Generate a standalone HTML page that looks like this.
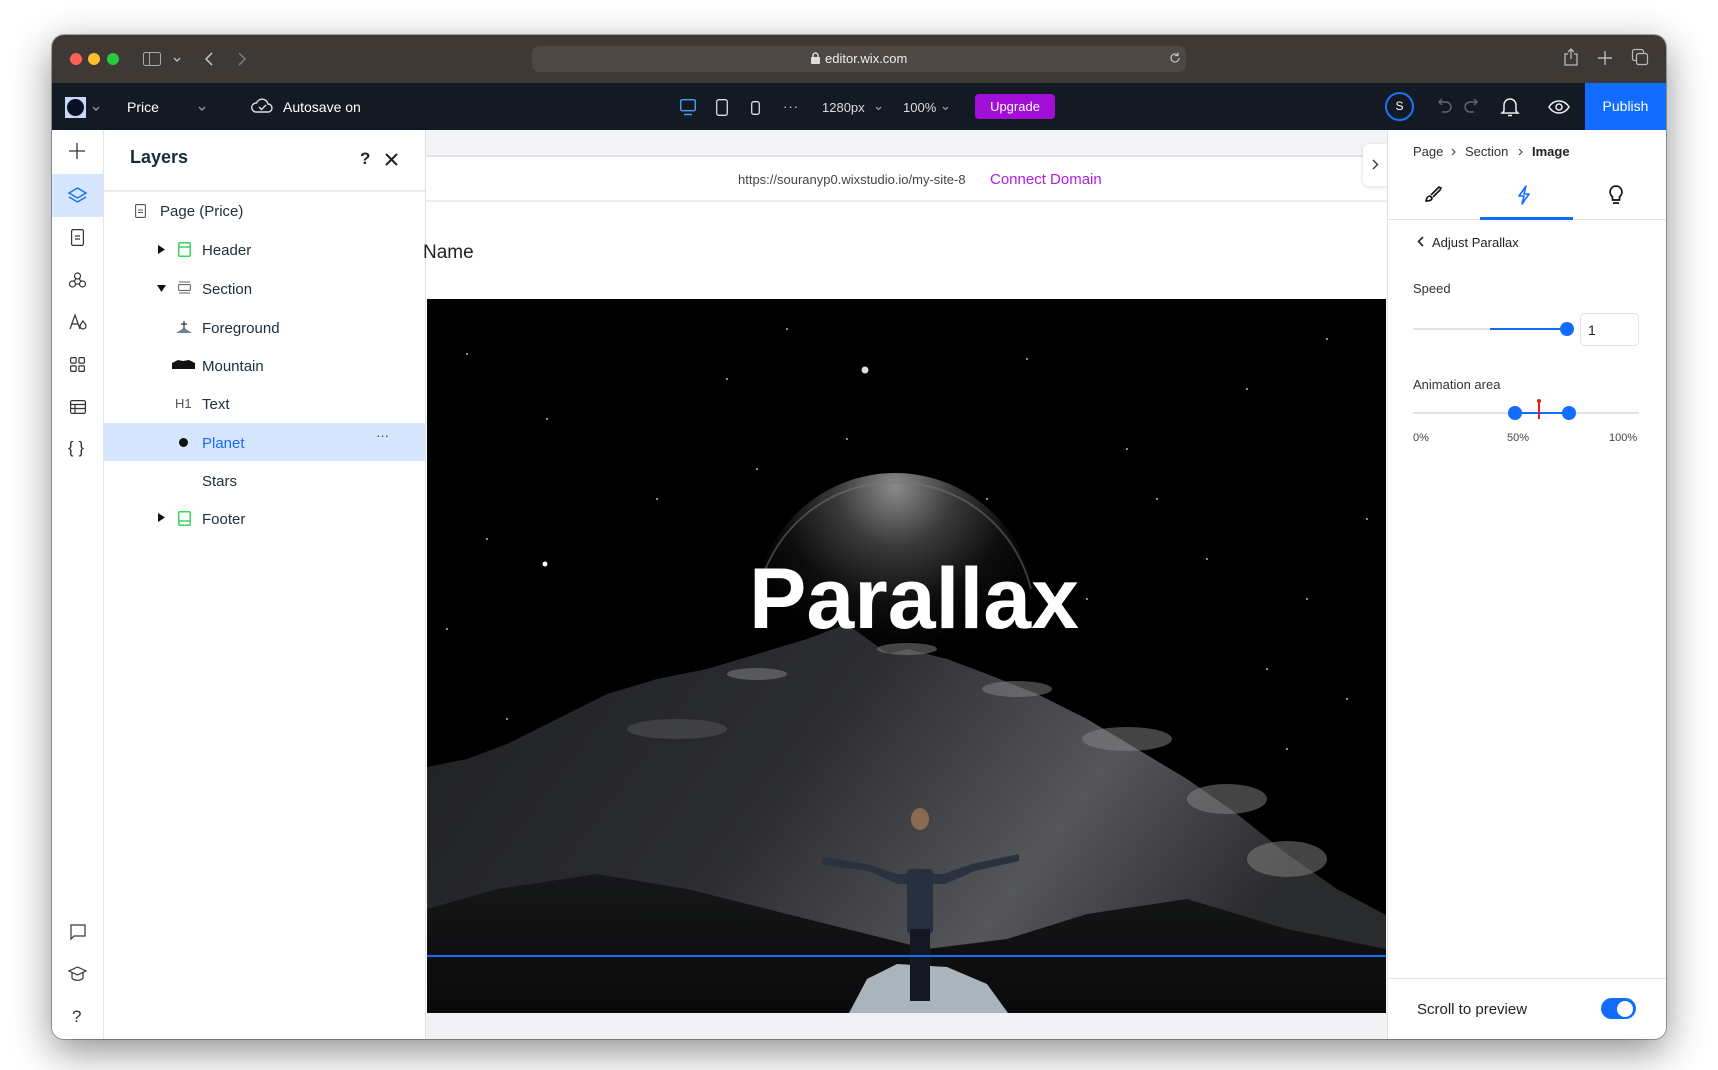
<!DOCTYPE html>
<html><head><meta charset="utf-8"><style>
*{box-sizing:border-box;margin:0;padding:0}
body{width:1718px;height:1070px;background:#fff;position:relative;overflow:hidden;font-family:"Liberation Sans",Arial,sans-serif}
.a{position:absolute}
#win{left:52px;top:35px;width:1614px;height:1004px;border-radius:12px;overflow:hidden;background:#fff;box-shadow:0 12px 40px rgba(0,0,0,.45),0 0 0 1px rgba(0,0,0,.3)}
.t{position:absolute;white-space:nowrap}
svg{position:absolute;overflow:visible}
</style></head><body>
<div id="win" class="a">
<div class="a" style="left:0;top:0;width:1614px;height:48px;background:#3e3935"></div>
<div class="a" style="left:18px;top:18px;width:12px;height:12px;border-radius:6px;background:#fe5f57"></div>
<div class="a" style="left:36px;top:18px;width:12px;height:12px;border-radius:6px;background:#febc2e"></div>
<div class="a" style="left:55px;top:18px;width:12px;height:12px;border-radius:6px;background:#28c840"></div>
<svg style="left:91px;top:17px" width="18" height="15"><rect x=".5" y=".5" width="17" height="13" rx="2" fill="none" stroke="#aaa"/><line x1="6.5" y1="1" x2="6.5" y2="14" stroke="#aaa"/></svg>
<svg style="left:121px;top:22px" width="8" height="6"><path d="M1 1l3 3 3-3" fill="none" stroke="#bbb" stroke-width="1.4"/></svg>
<svg style="left:153px;top:17px" width="8" height="14"><path d="M7 1L1 7l6 6" fill="none" stroke="#bbb" stroke-width="1.6"/></svg>
<svg style="left:186px;top:17px" width="8" height="14"><path d="M1 1l6 6-6 6" fill="none" stroke="#777" stroke-width="1.6"/></svg>
<div class="a" style="left:480px;top:11px;width:654px;height:26px;border-radius:7px;background:#4d4843"></div>
<svg style="left:759px;top:17px" width="9" height="12"><rect x="0" y="5" width="9" height="7" rx="1" fill="#ddd"/><path d="M2 5V3.5a2.5 2.5 0 015 0V5" fill="none" stroke="#ddd" stroke-width="1.4"/></svg>
<div class="t" style="left:773px;top:16px;font-size:13px;color:#eee">editor.wix.com</div>
<svg style="left:1117px;top:17px" width="12" height="12"><path d="M10 6a4 4 0 11-1.5-3.1M9 0.5v3h-3" fill="none" stroke="#bbb" stroke-width="1.3"/></svg>
<svg style="left:1512px;top:13px" width="14" height="18"><path d="M4 6H1v11h12V6h-3M7 11V1M4 4l3-3 3 3" fill="none" stroke="#bbb" stroke-width="1.3"/></svg>
<svg style="left:1546px;top:16px" width="14" height="14"><path d="M7 0v14M0 7h14" stroke="#bbb" stroke-width="1.4"/></svg>
<svg style="left:1580px;top:14px" width="17" height="17"><rect x="0.5" y="0.5" width="11" height="11" rx="2" fill="none" stroke="#bbb" stroke-width="1.2"/><rect x="4.5" y="4.5" width="11" height="11" rx="2" fill="#3e3935" stroke="#bbb" stroke-width="1.2"/></svg>

<div class="a" style="left:0;top:48px;width:1614px;height:47px;background:#141a24"></div>
<div class="a" style="left:13px;top:62px;width:21px;height:21px;background:#c8d8f8"></div>
<div class="a" style="left:15px;top:64px;width:17px;height:17px;border-radius:50%;background:#0a0f24"></div>
<svg style="left:40px;top:71px" width="8" height="5"><path d="M1 1l3 3 3-3" fill="none" stroke="#aaa" stroke-width="1.2"/></svg>
<div class="t" style="left:75px;top:64px;font-size:14px;color:#fff">Price</div>
<svg style="left:146px;top:71px" width="8" height="5"><path d="M1 1l3 3 3-3" fill="none" stroke="#aaa" stroke-width="1.2"/></svg>
<svg style="left:199px;top:62px" width="22" height="16"><path d="M5 15h12a4 4 0 000-8 6 6 0 00-11.5-1A4.5 4.5 0 005 15z" fill="none" stroke="#ddd" stroke-width="1.4"/><path d="M8 10l2.5 2.5L15 8" fill="none" stroke="#ddd" stroke-width="1.4"/></svg>
<div class="t" style="left:231px;top:64px;font-size:14px;color:#fff">Autosave on</div>
<svg style="left:628px;top:64px" width="16" height="17"><rect x="0.7" y="0.7" width="14.6" height="11" rx="1.5" fill="none" stroke="#4b9cf5" stroke-width="1.4"/><path d="M4 15.5h8" stroke="#4b9cf5" stroke-width="1.4"/></svg>
<svg style="left:664px;top:64px" width="12" height="17"><rect x="0.7" y="0.7" width="10.6" height="15.6" rx="2" fill="none" stroke="#ddd" stroke-width="1.3"/></svg>
<svg style="left:699px;top:66px" width="9" height="14"><rect x="0.7" y="0.7" width="7.6" height="12.6" rx="2" fill="none" stroke="#ddd" stroke-width="1.3"/></svg>
<div class="t" style="left:731px;top:64px;font-size:13px;color:#ddd;letter-spacing:1px">···</div>
<div class="t" style="left:770px;top:65px;font-size:13px;color:#ddd">1280px</div>
<svg style="left:823px;top:71px" width="7" height="5"><path d="M1 1l2.5 2.5L6 1" fill="none" stroke="#aaa" stroke-width="1.1"/></svg>
<div class="t" style="left:851px;top:65px;font-size:13px;color:#ddd">100%</div>
<svg style="left:890px;top:71px" width="7" height="5"><path d="M1 1l2.5 2.5L6 1" fill="none" stroke="#aaa" stroke-width="1.1"/></svg>
<div class="a" style="left:923px;top:59px;width:80px;height:25px;border-radius:4px;background:#a10fd6;color:#fff;font-size:13px;text-align:center;line-height:25px">Upgrade</div>
<div class="a" style="left:1333px;top:57px;width:29px;height:29px;border-radius:50%;border:2px solid #1a73ff;color:#fff;font-size:12px;text-align:center;line-height:25px">S</div>
<svg style="left:1386px;top:63px" width="14" height="16"><path d="M4 1L1 4l3 3M1 4h7a5 5 0 010 10H4" fill="none" stroke="#666" stroke-width="1.4"/></svg>
<svg style="left:1412px;top:63px" width="14" height="16"><path d="M10 1l3 3-3 3M13 4H6a5 5 0 000 10h4" fill="none" stroke="#666" stroke-width="1.4"/></svg>
<svg style="left:1449px;top:62px" width="18" height="20"><path d="M3 14V8a6 6 0 0112 0v6l2 2H1zM7 18.5h4" fill="none" stroke="#eee" stroke-width="1.5"/></svg>
<svg style="left:1496px;top:65px" width="22" height="14"><path d="M1 7c3-5 6.5-6 10-6s7 1 10 6c-3 5-6.5 6-10 6S4 12 1 7z" fill="none" stroke="#eee" stroke-width="1.5"/><circle cx="11" cy="7" r="3" fill="none" stroke="#eee" stroke-width="1.5"/></svg>
<div class="a" style="left:1533px;top:48px;width:81px;height:47px;background:#116dff;color:#fff;font-size:14px;text-align:center;line-height:47px">Publish</div>

<div class="a" style="left:0;top:95px;width:52px;height:909px;background:#fff;border-right:1px solid #e6e6e8"></div>
<div class="a" style="left:0;top:139px;width:51px;height:43px;background:#d6e6fe"></div>
<svg style="left:17px;top:108px" width="16" height="16"><path d="M8 0v16M0 8h16" stroke="#333" stroke-width="1.3"/></svg>
<svg style="left:16px;top:152px" width="19" height="16"><path d="M9.5 1L18 6l-8.5 5L1 6z" fill="none" stroke="#116dff" stroke-width="1.4"/><path d="M1 10l8.5 5 8.5-5" fill="none" stroke="#116dff" stroke-width="1.4"/></svg>
<svg style="left:19px;top:194px" width="13" height="17"><rect x="0.6" y="0.6" width="11.8" height="15.8" rx="1.5" fill="none" stroke="#333" stroke-width="1.2"/><path d="M4 7h5M4 10h5" stroke="#333" stroke-width="1.2"/></svg>
<svg style="left:17px;top:237px" width="17" height="16"><circle cx="8.5" cy="4" r="3" fill="none" stroke="#333" stroke-width="1.2"/><circle cx="3.5" cy="12" r="3" fill="none" stroke="#333" stroke-width="1.2"/><circle cx="13.5" cy="12" r="3" fill="none" stroke="#333" stroke-width="1.2"/><path d="M7 6.5L5 9.5M10 6.5l2 3M6.5 12h4" stroke="#333" stroke-width="1.2"/></svg>
<svg style="left:17px;top:279px" width="18" height="16"><path d="M1 15L6 1l5 14M2.8 10h6.4" fill="none" stroke="#333" stroke-width="1.2"/><path d="M14 7c-1.5 2-3 3.5-3 5a3 3 0 006 0c0-1.5-1.5-3-3-5z" fill="none" stroke="#333" stroke-width="1.2"/></svg>
<svg style="left:18px;top:322px" width="15" height="15"><rect x=".6" y=".6" width="5.5" height="5.5" rx="1" fill="none" stroke="#333" stroke-width="1.2"/><rect x="8.9" y=".6" width="5.5" height="5.5" rx="1" fill="none" stroke="#333" stroke-width="1.2"/><rect x=".6" y="8.9" width="5.5" height="5.5" rx="1" fill="none" stroke="#333" stroke-width="1.2"/><rect x="8.9" y="8.9" width="5.5" height="5.5" rx="1" fill="none" stroke="#333" stroke-width="1.2"/></svg>
<svg style="left:18px;top:365px" width="16" height="14"><rect x=".6" y=".6" width="14.8" height="12.8" rx="1.5" fill="none" stroke="#333" stroke-width="1.2"/><path d="M1 4.5h14M1 8.5h14M5 4.5v9" stroke="#333" stroke-width="1.2"/></svg>
<div class="t" style="left:16px;top:403px;font-size:17px;color:#333">{ }</div>
<svg style="left:18px;top:889px" width="16" height="16"><path d="M1 1h14v11H4l-3 3z" fill="none" stroke="#333" stroke-width="1.2"/></svg>
<svg style="left:16px;top:931px" width="19" height="16"><path d="M9.5 1L18 5l-8.5 4L1 5z" fill="none" stroke="#333" stroke-width="1.2"/><path d="M4 6.5V12c2 3 9 3 11 0V6.5" fill="none" stroke="#333" stroke-width="1.2"/></svg>
<div class="t" style="left:20px;top:972px;font-size:17px;color:#333">?</div>

<div class="a" style="left:52px;top:95px;width:322px;height:909px;background:#fff;border-right:1px solid #e0e0e3"></div>
<div class="t" style="left:78px;top:112px;font-size:18px;font-weight:bold;color:#162d3d">Layers</div>
<div class="t" style="left:308px;top:114px;font-size:17px;font-weight:bold;color:#222">?</div>
<svg style="left:333px;top:118px" width="13" height="13"><path d="M1 1l11 11M12 1L1 12" stroke="#222" stroke-width="2"/></svg>
<div class="a" style="left:52px;top:155px;width:321px;height:2px;background:#ececee"></div>
<div class="a" style="left:52px;top:388px;width:321px;height:38px;background:#d6e6fe"></div>
<svg style="left:83px;top:169px" width="11" height="14"><rect x=".6" y=".6" width="9.8" height="12.8" rx="1" fill="none" stroke="#555" stroke-width="1.1"/><path d="M3 6h5M3 8.5h5" stroke="#555"/></svg>
<div class="t" style="left:108px;top:168px;font-size:15px;color:#20303c">Page (Price)</div>
<svg style="left:106px;top:210px" width="7" height="9"><path d="M0 0l7 4.5L0 9z" fill="#111"/></svg>
<svg style="left:126px;top:207px" width="13" height="15"><rect x=".8" y=".8" width="11.4" height="13.4" rx="1" fill="none" stroke="#3ed35a" stroke-width="1.5"/><path d="M1 5h11" stroke="#3ed35a" stroke-width="1.5"/></svg>
<div class="t" style="left:150px;top:207px;font-size:15px;color:#20303c">Header</div>
<svg style="left:105px;top:250px" width="9" height="7"><path d="M0 0h9L4.5 7z" fill="#111"/></svg>
<svg style="left:126px;top:246px" width="13" height="13"><rect x=".6" y="3.6" width="11.8" height="5.8" rx="1" fill="none" stroke="#666" stroke-width="1.1"/><path d="M1 1h11M1 12h11" stroke="#666" stroke-width="1.1"/></svg>
<div class="t" style="left:150px;top:246px;font-size:15px;color:#20303c">Section</div>
<svg style="left:124px;top:284px" width="16" height="14"><path d="M0 14L8 9l8 5z" fill="#6a8090"/><path d="M8 2v8M5 5h6" stroke="#333" stroke-width="1.2"/></svg>
<div class="t" style="left:150px;top:285px;font-size:15px;color:#20303c">Foreground</div>
<svg style="left:120px;top:324px" width="23" height="10"><path d="M0 10V4l6-3 5 1 6 -1 6 3v6z" fill="#111"/></svg>
<div class="t" style="left:150px;top:323px;font-size:15px;color:#20303c">Mountain</div>
<div class="t" style="left:123px;top:361px;font-size:13px;color:#555">H1</div>
<div class="t" style="left:150px;top:361px;font-size:15px;color:#20303c">Text</div>
<div class="a" style="left:127px;top:403px;width:9px;height:9px;border-radius:50%;background:#111"></div>
<div class="t" style="left:150px;top:400px;font-size:15px;color:#116dff">Planet</div>
<div class="t" style="left:324px;top:393px;font-size:13px;color:#333">···</div>
<div class="t" style="left:150px;top:438px;font-size:15px;color:#20303c">Stars</div>
<svg style="left:106px;top:478px" width="7" height="9"><path d="M0 0l7 4.5L0 9z" fill="#111"/></svg>
<svg style="left:126px;top:476px" width="13" height="15"><rect x=".8" y=".8" width="11.4" height="13.4" rx="1" fill="none" stroke="#3ed35a" stroke-width="1.5"/><path d="M1 10h11" stroke="#3ed35a" stroke-width="1.5"/></svg>
<div class="t" style="left:150px;top:476px;font-size:15px;color:#20303c">Footer</div>

<div class="a" style="left:374px;top:95px;width:961px;height:909px;background:#f4f4f6"></div>
<div class="a" style="left:374px;top:120px;width:961px;height:884px;background:#fff"></div>
<div class="a" style="left:374px;top:120px;width:961px;height:47px;background:#fff;border-top:2px solid #e3e3ea;border-bottom:2px solid #ececf0"></div>
<div class="t" style="left:686px;top:137px;font-size:13px;color:#444">https://souranyp0.wixstudio.io/my-site-8</div>
<div class="t" style="left:938px;top:136px;font-size:15px;color:#b01ee0">Connect Domain</div>
<div class="a" style="left:1311px;top:109px;width:24px;height:42px;background:#fff;border-radius:6px 0 0 6px;box-shadow:0 1px 4px rgba(0,0,0,.15)"></div>
<svg style="left:1320px;top:124px" width="7" height="11"><path d="M1 1l4.5 4.5L1 10" fill="none" stroke="#333" stroke-width="1.4"/></svg>
<div class="t" style="left:371px;top:207px;font-size:19px;color:#222">Name</div>
<div class="a" style="left:374px;top:978px;width:961px;height:26px;background:#f2f2f4"></div>

<svg style="left:375px;top:264px" width="959" height="714" viewBox="0 0 959 714">
<defs>
<radialGradient id="pl" cx="0.5" cy="0.05" r="0.6"><stop offset="0" stop-color="#8a8a8a"/><stop offset=".35" stop-color="#3a3a3a"/><stop offset=".7" stop-color="#0d0d0d"/><stop offset="1" stop-color="#000"/></radialGradient>
<linearGradient id="mt" x1="0" y1="0" x2="1" y2="0.3"><stop offset="0" stop-color="#1f2022"/><stop offset=".45" stop-color="#2c2d30"/><stop offset=".75" stop-color="#55565a"/><stop offset="1" stop-color="#2a2b2d"/></linearGradient>
<linearGradient id="fg" x1="0" y1="0" x2="0" y2="1"><stop offset="0" stop-color="#161718"/><stop offset="1" stop-color="#0a0a0b"/></linearGradient>
</defs>
<rect width="959" height="714" fill="#000"/>
<g fill="#bbb"><circle cx="438" cy="71" r="3.5" fill="#ddd"/><circle cx="118" cy="265" r="2.5" fill="#fff"/>
<circle cx="40" cy="55" r="1"/><circle cx="120" cy="120" r="1"/><circle cx="300" cy="80" r="1"/><circle cx="420" cy="140" r="1"/><circle cx="600" cy="60" r="1"/><circle cx="700" cy="150" r="1"/><circle cx="820" cy="90" r="1"/><circle cx="900" cy="40" r="1"/><circle cx="940" cy="220" r="1"/><circle cx="880" cy="300" r="1"/><circle cx="780" cy="260" r="1"/><circle cx="60" cy="240" r="1"/><circle cx="230" cy="200" r="1"/><circle cx="250" cy="380" r="1"/><circle cx="80" cy="420" r="1"/><circle cx="920" cy="400" r="1"/><circle cx="840" cy="370" r="1"/><circle cx="360" cy="30" r="1"/><circle cx="660" cy="300" r="1"/><circle cx="20" cy="330" r="1"/><circle cx="150" cy="460" r="1"/><circle cx="860" cy="450" r="1"/><circle cx="330" cy="170" r="1"/><circle cx="560" cy="200" r="1"/><circle cx="730" cy="200" r="1"/></g>
<circle cx="468" cy="314" r="140" fill="url(#pl)"/>
<path d="M332 290 A140 140 0 0 1 604 290" fill="none" stroke="#777" stroke-width="2" opacity=".5"/>
<path d="M0 468 L40 460 L80 445 L130 420 L180 395 L230 380 L280 370 L330 355 L380 340 L420 325 L461 355 L480 350 L520 360 L560 375 L610 395 L660 420 L710 450 L760 480 L810 515 L860 555 L910 590 L959 616 L959 714 L0 714z" fill="url(#mt)"/>
<g opacity=".5" fill="#888"><ellipse cx="480" cy="350" rx="30" ry="6"/><ellipse cx="590" cy="390" rx="35" ry="8"/><ellipse cx="700" cy="440" rx="45" ry="12"/><ellipse cx="800" cy="500" rx="40" ry="15"/><ellipse cx="860" cy="560" rx="40" ry="18"/><ellipse cx="330" cy="375" rx="30" ry="6"/><ellipse cx="250" cy="430" rx="50" ry="10" opacity=".5"/></g>
<path d="M0 610 L70 590 L170 575 L260 590 L340 610 L420 630 L500 650 L580 640 L660 615 L760 600 L860 630 L959 650 L959 714 L0 714z" fill="url(#fg)"/>
<path d="M422 714 L440 680 L470 665 L520 668 L560 685 L581 714z" fill="#aab4bc"/>
<path d="M395 558 L440 565 L470 575 L493 575 L516 575 L545 565 L592 555 L592 562 L548 572 L518 585 L470 585 L442 572 L395 566z" fill="#2a3240"/>
<rect x="480" y="570" width="26" height="65" rx="4" fill="#283040"/>
<rect x="483" y="630" width="20" height="72" fill="#151820"/>
<ellipse cx="493" cy="520" rx="9" ry="11" fill="#8a6a50"/>
<text x="487" y="329" text-anchor="middle" font-family="Liberation Sans, Arial, sans-serif" font-weight="bold" font-size="86" fill="#fff">Parallax</text>
<rect x="0" y="656" width="959" height="2" fill="#116dff"/>
</svg>

<div class="a" style="left:1335px;top:95px;width:279px;height:909px;background:#fff;border-left:1px solid #e0e0e3"></div>
<div class="t" style="left:1361px;top:109px;font-size:13px;color:#333">Page</div>
<svg style="left:1399px;top:113px" width="5" height="8"><path d="M1 1l3 3-3 3" fill="none" stroke="#444" stroke-width="1.1"/></svg>
<div class="t" style="left:1413px;top:109px;font-size:13px;color:#333">Section</div>
<svg style="left:1466px;top:113px" width="5" height="8"><path d="M1 1l3 3-3 3" fill="none" stroke="#444" stroke-width="1.1"/></svg>
<div class="t" style="left:1480px;top:109px;font-size:13px;font-weight:bold;color:#222">Image</div>
<svg style="left:1372px;top:150px" width="18" height="18"><path d="M2 16c1-4 2-5 4-5l2 2c0 2-2 3-6 3zM7 10l8-8 2 1-1 2-7 7" fill="none" stroke="#111" stroke-width="1.6"/></svg>
<svg style="left:1465px;top:150px" width="14" height="20"><path d="M9 1L2 11h5l-2 8 7-10H7z" fill="none" stroke="#116dff" stroke-width="1.6" stroke-linejoin="round"/></svg>
<svg style="left:1557px;top:150px" width="14" height="20"><path d="M7 1a6 6 0 00-3.5 10.8V15h7v-3.2A6 6 0 007 1zM4 18h6" fill="none" stroke="#111" stroke-width="1.7"/></svg>
<div class="a" style="left:1335px;top:184px;width:279px;height:1px;background:#e3e3e6"></div>
<div class="a" style="left:1428px;top:182px;width:93px;height:3px;background:#116dff"></div>
<svg style="left:1365px;top:201px" width="7" height="11"><path d="M6 1L1.5 5.5 6 10" fill="none" stroke="#222" stroke-width="1.6"/></svg>
<div class="t" style="left:1380px;top:200px;font-size:13px;color:#222">Adjust Parallax</div>
<div class="t" style="left:1361px;top:246px;font-size:13px;color:#333">Speed</div>
<div class="a" style="left:1361px;top:293px;width:160px;height:2px;background:#e3e3e6"></div>
<div class="a" style="left:1438px;top:293px;width:80px;height:2px;background:#116dff"></div>
<div class="a" style="left:1508px;top:287px;width:14px;height:14px;border-radius:50%;background:#116dff"></div>
<div class="a" style="left:1528px;top:278px;width:59px;height:33px;border:1px solid #e3e3e6;border-radius:5px;font-size:14px;color:#222;padding:8px 0 0 7px">1</div>
<div class="t" style="left:1361px;top:342px;font-size:13px;color:#333">Animation area</div>
<div class="a" style="left:1361px;top:377px;width:226px;height:2px;background:#e3e3e6"></div>
<div class="a" style="left:1463px;top:377px;width:55px;height:2px;background:#116dff"></div>
<div class="a" style="left:1456px;top:371px;width:14px;height:14px;border-radius:50%;background:#116dff"></div>
<div class="a" style="left:1510px;top:371px;width:14px;height:14px;border-radius:50%;background:#116dff"></div>
<div class="a" style="left:1486px;top:366px;width:2px;height:18px;background:#e02020"></div>
<div class="a" style="left:1485px;top:364px;width:4px;height:4px;border-radius:50%;background:#e02020"></div>
<div class="t" style="left:1361px;top:397px;font-size:11px;color:#444">0%</div>
<div class="t" style="left:1455px;top:397px;font-size:11px;color:#444">50%</div>
<div class="t" style="left:1557px;top:397px;font-size:11px;color:#444">100%</div>
<div class="a" style="left:1335px;top:943px;width:279px;height:1px;background:#e3e3e6"></div>
<div class="t" style="left:1365px;top:966px;font-size:15px;color:#222">Scroll to preview</div>
<div class="a" style="left:1549px;top:963px;width:35px;height:21px;border-radius:11px;background:#116dff"></div>
<div class="a" style="left:1565px;top:966px;width:16px;height:16px;border-radius:50%;background:#fff"></div>
</div>
</body></html>
